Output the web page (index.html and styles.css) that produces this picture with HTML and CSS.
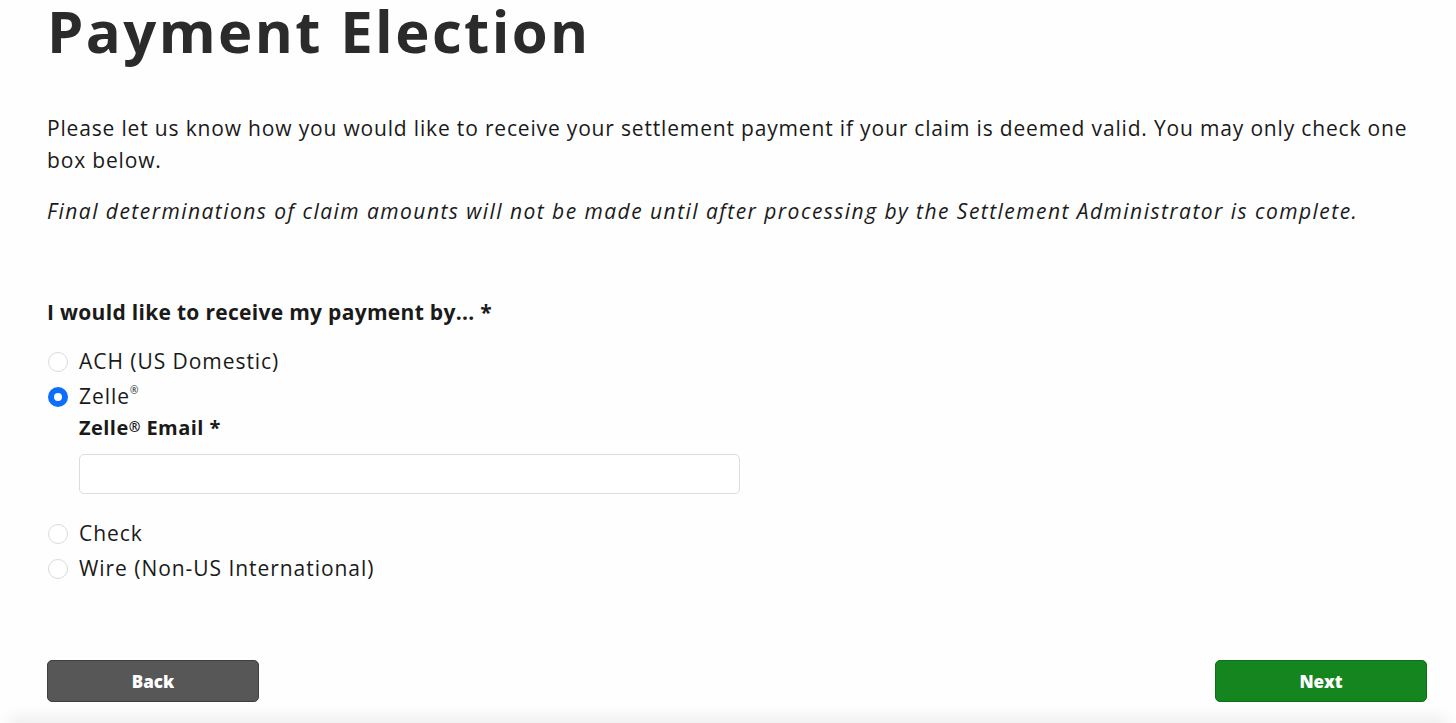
FILE: index.html
```html
<!DOCTYPE html>
<html lang="en">
<head>
<meta charset="utf-8">
<title>Payment Election</title>
<link rel="stylesheet" href="styles.css">
</head>
<body>
<main class="page">
  <h1 class="title">Payment Election</h1>
  <p class="intro">Please let us know how you would like to receive your settlement payment if your claim is deemed valid. You may only check one box below.</p>
  <p class="note">Final determinations of claim amounts will not be made until after processing by the Settlement Administrator is complete.</p>

  <fieldset class="group">
    <legend class="legend">I would like to receive my payment by... *</legend>
    <label class="option"><span class="radio"></span><span>ACH (US Domestic)</span></label>
    <label class="option"><span class="radio checked"></span><span>Zelle<sup class="reg">®</sup></span></label>
    <div class="sub">
      <div class="sub-label">Zelle<span class="reg-b">®</span> Email *</div>
      <div class="input"></div>
    </div>
    <label class="option"><span class="radio"></span><span>Check</span></label>
    <label class="option"><span class="radio"></span><span>Wire (Non-US International)</span></label>
  </fieldset>

  <div class="actions">
    <button class="btn back">Back</button>
    <button class="btn next">Next</button>
  </div>
</main>
<div class="shade"></div>
</body>
</html>
```

FILE: styles.css
```css
html, body {
  margin: 0;
  padding: 0;
  background: #fefefe;
}
body {
  font-family: "Open Sans", "Liberation Sans", sans-serif;
  color: #1a1a1a;
  height: 723px;
  overflow: hidden;
  position: relative;
}
.shade {
  position: absolute;
  left: 10px;
  right: 10px;
  bottom: -20px;
  height: 20px;
  box-shadow: 0 -6px 16px rgba(0, 0, 0, 0.07);
}
.page {
  padding: 0 29px 0 47px;
}
.title {
  margin: 0;
  padding-top: 1px;
  font-size: 58px;
  font-weight: 700;
  line-height: 60px;
  color: #2b2b2b;
  letter-spacing: 2.4px;
}
.intro {
  margin: 51px 0 0;
  font-size: 21px;
  line-height: 32px;
  letter-spacing: 0.83px;
}
.note {
  margin: 19px 0 0;
  font-size: 21px;
  line-height: 32px;
  font-style: italic;
  letter-spacing: 1.46px;
}
.group {
  border: 0;
  margin: 69px 0 0;
  padding: 0;
  display: flex;
  flex-direction: column;
}
.legend {
  padding: 0;
  font-size: 21px;
  font-weight: 700;
  line-height: 32px;
  margin-bottom: 16px;
  letter-spacing: 0.3px;
}
.option {
  display: flex;
  align-items: center;
  gap: 11px;
  font-size: 21px;
  line-height: 35px;
  height: 35px;
  letter-spacing: 0.95px;
}
.radio {
  width: 20px;
  height: 20px;
  margin-left: 1px;
  box-sizing: border-box;
  border: 1px solid #d8dade;
  border-radius: 50%;
  background: #fff;
  flex: none;
}
.radio.checked {
  border: 6px solid #0d6efd;
}
.reg {
  font-size: 10px;
  vertical-align: 10px;
  line-height: 0;
  letter-spacing: 0;
}
.reg-b {
  font-size: 14px;
  vertical-align: 3px;
  line-height: 0;
}
.sub {
  padding-left: 32px;
  display: flex;
  flex-direction: column;
}
.sub-label {
  font-size: 20px;
  font-weight: 700;
  line-height: 32px;
  margin-top: -2px;
  letter-spacing: 0.45px;
}
.input {
  margin-top: 10px;
  width: 661px;
  height: 40px;
  box-sizing: border-box;
  border: 1px solid #d9dce1;
  border-radius: 5px;
  background: #fff;
  margin-bottom: 22px;
}
.actions {
  display: flex;
  justify-content: space-between;
  margin-top: 74px;
}
.btn {
  width: 212px;
  height: 42px;
  border-radius: 5px;
  font-family: "Open Sans", "Liberation Sans", sans-serif;
  font-size: 17px;
  font-weight: 800;
  color: #fff;
  cursor: pointer;
}
.back {
  background: #575757;
  border: 1px solid #3f3f3f;
}
.next {
  background: #15851f;
  border: 1px solid #0f6e18;
}
```
